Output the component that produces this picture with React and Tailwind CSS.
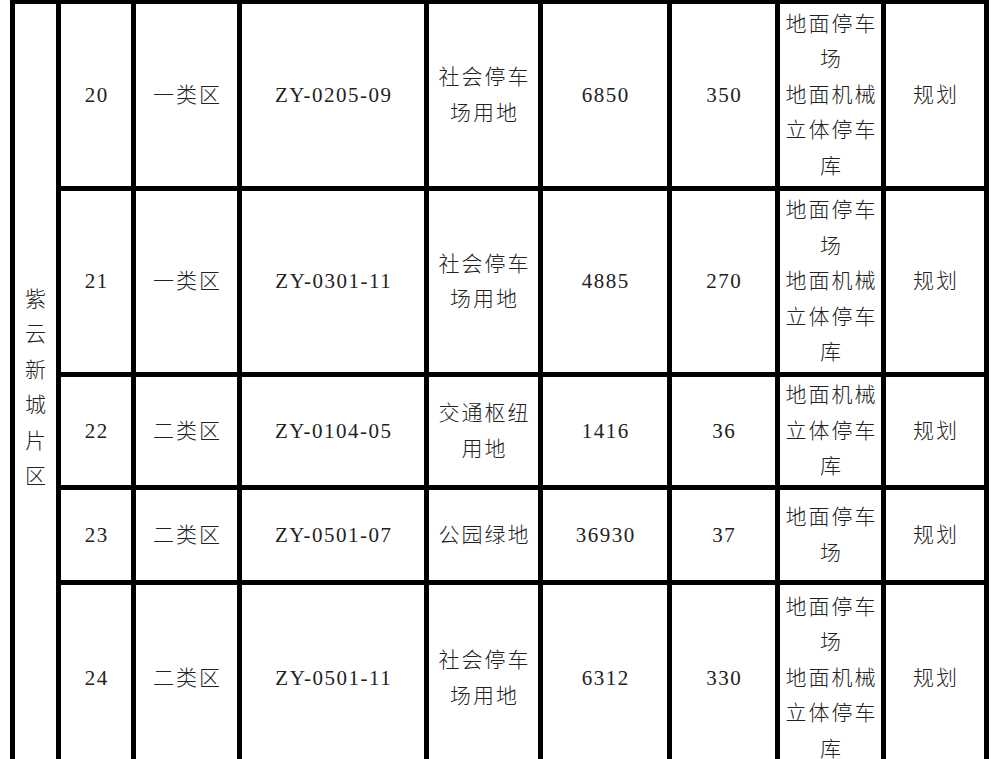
import React from 'react'

const rows = [
    { no: '20', zone: '一类区', code: 'ZY-0205-09', use: ['社会停车', '场用地'], area: '6850', spaces: '350', type: ['地面停车', '场', '地面机械', '立体停车', '库'], status: '规划' },
    { no: '21', zone: '一类区', code: 'ZY-0301-11', use: ['社会停车', '场用地'], area: '4885', spaces: '270', type: ['地面停车', '场', '地面机械', '立体停车', '库'], status: '规划' },
    { no: '22', zone: '二类区', code: 'ZY-0104-05', use: ['交通枢纽', '用地'], area: '1416', spaces: '36', type: ['地面机械', '立体停车', '库'], status: '规划' },
    { no: '23', zone: '二类区', code: 'ZY-0501-07', use: ['公园绿地'], area: '36930', spaces: '37', type: ['地面停车', '场'], status: '规划' },
    { no: '24', zone: '二类区', code: 'ZY-0501-11', use: ['社会停车', '场用地'], area: '6312', spaces: '330', type: ['地面停车', '场', '地面机械', '立体停车', '库'], status: '规划' },
]

const cell = 'bg-white flex flex-col items-center justify-center text-center pt-[1px]'
const cjk = 'tracking-[2px] pl-[2px]'
const num = 'tracking-[1.5px] pl-[1.5px]'

const Lines = ({ items }) => (
    <div className={cjk}>
        {items.map((t, i) => (
            <span key={i} className="block whitespace-nowrap">{t}</span>
        ))}
    </div>
)

const App = () => {
    return (
        <div
            className="w-[994px] h-[759px] overflow-hidden bg-white text-[#222] text-[21px] leading-[35.5px]"
            style={{ fontFamily: '"Liberation Serif", "Noto Sans CJK SC", serif' }}
        >
            <div className="ml-[10px] w-[979px] bg-black px-[5px] pt-[4px] pb-[5px] grid gap-[5px] grid-cols-[41px_70px_101px_182px_109px_124px_103px_101px_98px] grid-rows-[182px_181px_108px_90px_186px] font-[300]">
                <div className={`${cell} row-span-5`}>
                    {'紫云新城片区'.split('').map((c, i) => (
                        <span key={i} className="block">{c}</span>
                    ))}
                </div>

                {rows.map((r) => (
                    <React.Fragment key={r.no}>
                        <div className={cell}><span className={num}>{r.no}</span></div>
                        <div className={cell}><span className={cjk}>{r.zone}</span></div>
                        <div className={cell}><span className={num}>{r.code}</span></div>
                        <div className={cell}><Lines items={r.use} /></div>
                        <div className={cell}><span className={num}>{r.area}</span></div>
                        <div className={cell}><span className={num}>{r.spaces}</span></div>
                        <div className={cell}><Lines items={r.type} /></div>
                        <div className={cell}><span className={cjk}>{r.status}</span></div>
                    </React.Fragment>
                ))}
            </div>
        </div>
    )
}

export default App
